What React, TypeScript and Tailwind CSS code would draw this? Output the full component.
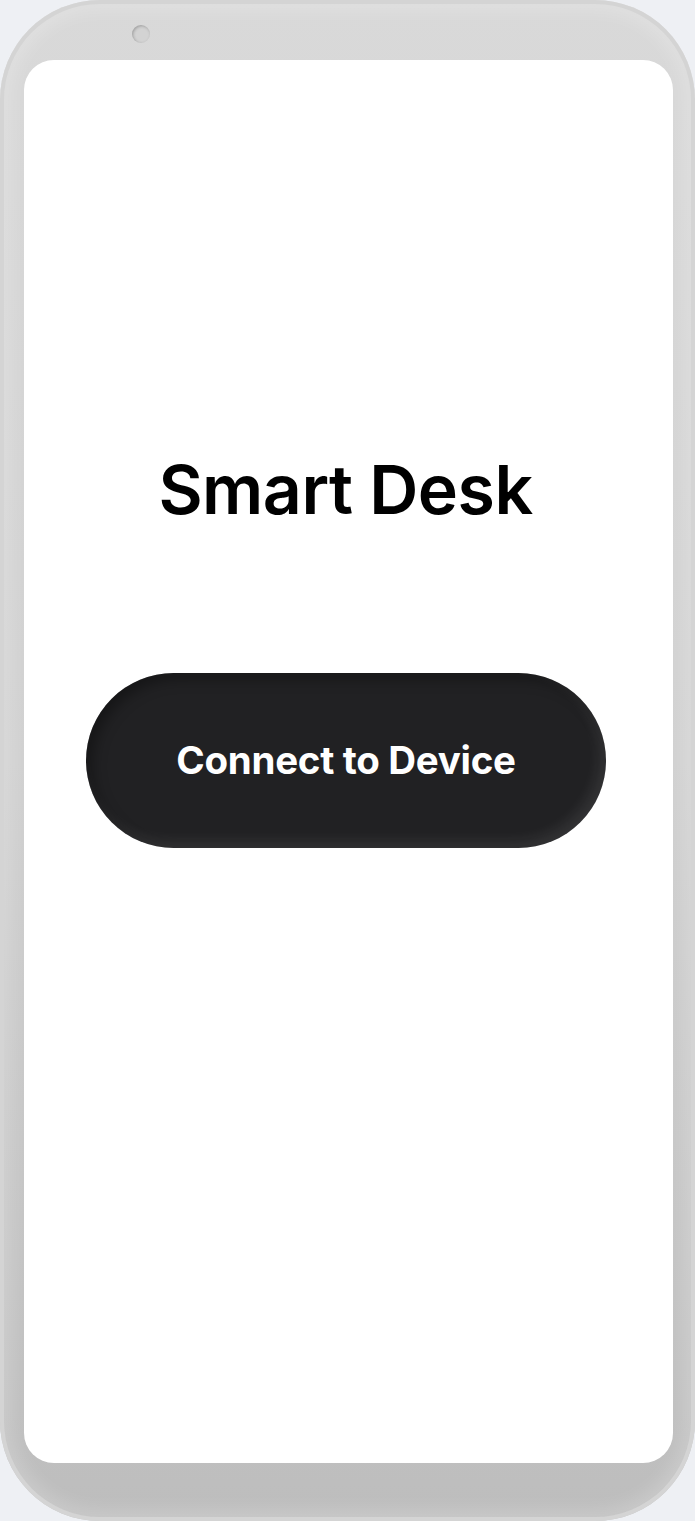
import React from 'react';

export default function App() {
    return (
        <div className="w-[695px] h-[1521px] bg-[#eef0f4]">
            {/* Phone frame */}
            <div className="relative w-full h-full rounded-[100px] bg-gradient-to-b from-[#d9d9d9] via-[#d1d1d1] to-[#bdbdbd] shadow-[inset_0_0_0_4px_#d4d4d4,inset_0_0_16px_12px_rgba(255,255,255,0.18)] pt-[60px] pl-[24px] pr-[22px] pb-[58px]">
                {/* Camera */}
                <div className="absolute left-[132px] top-[25px] w-[18px] h-[18px] rounded-full bg-[#d3d3d3] shadow-[inset_1px_1px_3px_rgba(0,0,0,0.25)]" />

                {/* Screen */}
                <div className="w-full h-full rounded-[30px] bg-white flex flex-col items-center">
                    <h1 className="mt-[389px] pr-[6px] text-[68px] leading-[80px] font-semibold text-black tracking-[-0.5px] font-['Inter',sans-serif]">
                        Smart Desk
                    </h1>
                    <button className="mt-[144px] self-start ml-[62px] w-[520px] h-[175px] rounded-full bg-[#212123] shadow-[inset_-6px_-6px_14px_rgba(255,255,255,0.09),inset_6px_6px_14px_rgba(0,0,0,0.35)] flex items-center justify-center">
                        <span className="text-white text-[38.5px] font-bold font-['Inter',sans-serif] tracking-[-0.3px]">
                            Connect to Device
                        </span>
                    </button>
                </div>
            </div>
        </div>
    );
}
